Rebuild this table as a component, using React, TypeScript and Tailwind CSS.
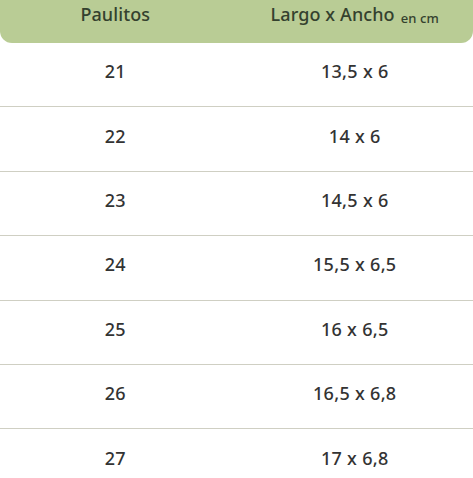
import React from 'react';

const rows: [string, string][] = [
  ['21', '13,5 x 6'],
  ['22', '14 x 6'],
  ['23', '14,5 x 6'],
  ['24', '15,5 x 6,5'],
  ['25', '16 x 6,5'],
  ['26', '16,5 x 6,8'],
  ['27', '17 x 6,8'],
];

export default function App() {
  return (
    <div className="w-[473px] h-[478px] overflow-hidden bg-white font-['Noto_Sans','Open_Sans',sans-serif]">
      {/* header */}
      <div className="grid grid-cols-2 h-[43px] bg-[#b9cc95] rounded-b-[12px] text-[#34412e] text-[18px] font-medium tracking-[0.1px]">
        <div className="flex items-center justify-center pr-[6px] pb-[15px]">Paulitos</div>
        <div className="flex items-center justify-center pb-[15px]">
          Largo x Ancho<span className="text-[13px] ml-[6px] translate-y-[5px]">en cm</span>
        </div>
      </div>

      {rows.map(([n, size], i) => (
        <div
          key={n}
          className={`grid grid-cols-2 h-[64.4px] text-[18px] font-medium tracking-[0.3px] text-[#333333] ${i < rows.length - 1 ? 'border-b-[1.5px] border-[#cfcfc3]' : ''}`}
        >
          <div className="flex items-center justify-center pr-[6px] pb-[6px]">{n}</div>
          <div className="flex items-center justify-center pb-[6px]">{size}</div>
        </div>
      ))}
    </div>
  );
}
